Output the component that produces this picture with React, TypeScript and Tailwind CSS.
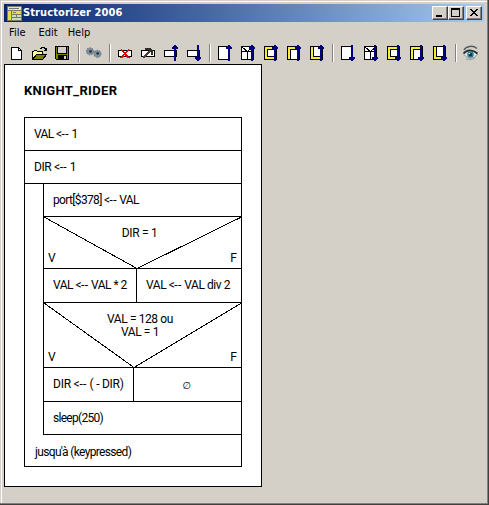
import React from "react";

const navy = "#000080";

function Glyph({ children }: { children: React.ReactNode }) {
  return (
    <button className="flex h-[22px] w-[23px] shrink-0 items-start pl-[3px] pt-[3px]">
      <svg width="17" height="17" viewBox="0 0 17 17" shapeRendering="crispEdges" className="block shrink-0">
        {children}
      </svg>
    </button>
  );
}

function Separator() {
  return (
    <div className="h-[22px] w-2 shrink-0 pl-1 pt-0.5">
      <div className="h-[18px] w-0.5 border-l border-r border-l-[#85827c] border-r-white" />
    </div>
  );
}

function Arrow({ down = false }: { down?: boolean }) {
  return (
    <g fill={navy} transform={down ? "matrix(1 0 0 -1 0 16)" : undefined}>
      <rect x="12" y="0" width="2" height="16" />
      <rect x="11" y="1" width="4" height="1" />
      <rect x="10" y="2" width="6" height="2" />
    </g>
  );
}

function Box({ x, y, w, h, fill = "#fff" }: { x: number; y: number; w: number; h: number; fill?: string }) {
  return <rect x={x + 0.5} y={y + 0.5} width={w - 1} height={h - 1} fill={fill} stroke="#000" />;
}

function InsertIcons({ down = false }: { down?: boolean }) {
  return (
    <>
      <Glyph>
        <Box x={2} y={1} w={12} h={14} />
        <Arrow down={down} />
      </Glyph>
      <Glyph>
        <Box x={2} y={1} w={13} h={14} />
        <path d="M2.5 6.5h12M8.5 6v8M3 2l5.500 4.500L14 2" fill="none" stroke="#000" />
        <Arrow down={down} />
      </Glyph>
      <Glyph>
        <Box x={2} y={1} w={13} h={14} fill="#f5ee35" />
        <Box x={5} y={4} w={10} h={8} />
        <Arrow down={down} />
      </Glyph>
      <Glyph>
        <Box x={2} y={1} w={13} h={14} fill="#f5ee35" />
        <Box x={5} y={4} w={10} h={11} />
        <Arrow down={down} />
      </Glyph>
      <Glyph>
        <Box x={2} y={1} w={13} h={14} fill="#f5ee35" />
        <Box x={5} y={1} w={10} h={11} />
        <Arrow down={down} />
      </Glyph>
    </>
  );
}

function Toolbar() {
  return (
    <div className="flex h-[22px] pl-px">
      <Glyph>
        <path d="M3.5 2.5h7l3 3v9h-10z" fill="#fff" stroke="#000" />
        <path d="M10.5 2.5v3h3" fill="none" stroke="#000" />
      </Glyph>
      <Glyph>
        <path d="M1.5 14V6.5h1l1-1h2l1 1h5v3" fill="#ffff9a" stroke="#000" />
        <path d="M1.5 14.5l4-5h10l-4 5z" fill="#808000" stroke="#000" />
        <path d="M9.5 4V3.5h1v-1h3v1h1v2M12.5 5.5h3M15.5 3v3" fill="none" stroke="#000" />
      </Glyph>
      <Glyph>
        <path d="M1.5 1.5h13v13h-12l-1-1z" fill="#808000" stroke="#000" />
        <path d="M4 2h8v6H4z" fill="#d4d0c8" />
        <path d="M3.5 2v6.5h9V2" fill="none" stroke="#000" />
        <path d="M4 10h9v5H4z" fill="#000" />
        <path d="M10 11h2v3h-2z" fill="#d4d0c8" />
      </Glyph>
      <Separator />
      <Glyph>
        <g shapeRendering="auto">
          <circle cx="5" cy="6.300" r="3.300" fill="#84909a" stroke="#75828d" strokeWidth="1.600" strokeDasharray="1.600 .8" />
          <circle cx="12.400" cy="8.800" r="3.300" fill="#84909a" stroke="#75828d" strokeWidth="1.600" strokeDasharray="1.600 .8" />
          <circle cx="5.500" cy="6.500" r="1.400" fill="#263c4b" />
          <circle cx="12.700" cy="8.400" r="1.400" fill="#263c4b" />
        </g>
      </Glyph>
      <Separator />
      <Glyph>
        <Box x={2} y={5} w={14} h={7} />
        <path d="M5 4.5l8 8.5M13 4.5L5 13" stroke="#e00000" strokeWidth="1.7" />
      </Glyph>
      <Glyph>
        <Box x={2} y={5} w={14} h={7} />
        <path d="M4 13l7-7" stroke="#513d35" strokeWidth="2" />
        <path d="M6 3h5l3 3v4h-2V7L9 5H6z" fill="#302a28" />
      </Glyph>
      <Glyph>
        <Box x={2} y={5} w={13} h={7} />
        <Arrow />
      </Glyph>
      <Glyph>
        <Box x={2} y={5} w={13} h={7} />
        <Arrow down />
      </Glyph>
      <Separator />
      <InsertIcons />
      <Separator />
      <InsertIcons down />
      <Separator />
      <Glyph>
        <g shapeRendering="auto">
          <path d="M2 5C4 1 11 0 15 3.500" fill="none" stroke="#555c60" strokeWidth="1.500" />
          <path d="M2 9.500C5 5 11 5 15.500 9 12 14.500 6 14.500 2 9.500z" fill="#d8e7ea" stroke="#777f82" strokeWidth=".7" />
          <path d="M1.500 8.500C5 4 11 4.500 15.500 8.500" fill="none" stroke="#232b30" strokeWidth="1.700" />
          <circle cx="8.500" cy="9.500" r="3.200" fill="#28788c" />
          <circle cx="8.500" cy="9.500" r="1.500" fill="#07232f" />
          <circle cx="7.500" cy="8.500" r=".8" fill="#d5ffff" />
          <path d="M4 14q5 2 9-1" fill="none" stroke="#8b8e8b" strokeWidth=".8" />
        </g>
      </Glyph>
    </div>
  );
}

function CaptionButton({ children }: { children: React.ReactNode }) {
  return (
    <button className="h-3.5 w-4 border border-b-[#404040] border-l-white border-r-[#404040] border-t-white bg-[#d4d0c8] shadow-[inset_-1px_-1px_0_#808080]">
      <svg width="14" height="12" viewBox="0 0 14 12" shapeRendering="crispEdges" className="block">
        {children}
      </svg>
    </button>
  );
}

function TitleBar() {
  return (
    <div className="flex h-[18px] items-center bg-linear-to-r from-[#0a246a] to-[#a6caf0] pl-[3px] pr-0.5">
      <svg width="15" height="15" viewBox="0 0 15 15" shapeRendering="crispEdges" className="shrink-0">
        <rect width="15" height="15" fill="#77796a" />
        <path d="M1 1h13v3H1z" fill="#e4e4d4" />
        <path d="M2 2h10v1H2z" fill="#77796a" />
        <path d="M1 5h3v9H1z" fill="#e4dc45" />
        <path d="M5 5h9v3H5z" fill="#e4dc45" />
        <path d="M6 6h3v1H6z" fill="#77796a" />
        <path d="M5 9h4v2H5zM10 9h4v2h-4zM5 12h9v2H5z" fill="#d5d5c5" />
      </svg>
      <span className="ml-px grow whitespace-nowrap font-['DejaVu_Sans_Condensed','DejaVu_Sans',sans-serif] text-[11px] font-bold leading-[18px] tracking-[0.1px] text-white">
        Structorizer 2006
      </span>
      <CaptionButton>
        <path d="M3 8h6v2H3z" />
      </CaptionButton>
      <CaptionButton>
        <path d="M2.500 1.500h8v8h-8zM2 2.500h9" fill="none" stroke="#000" />
      </CaptionButton>
      <div className="w-0.5" />
      <CaptionButton>
        <path d="M3 2h2v1h1v1h2V3h1V2h2v1h-1v1H9v1H8v1h1v1h1v1h1v1H9V8H8V7H6v1H5v1H3V8h1V7h1V6h1V5H5V4H4V3H3z" />
      </CaptionButton>
    </div>
  );
}

function Row({ children, className = "" }: { children: React.ReactNode; className?: string }) {
  return <div className={"flex items-center border-b border-black " + className}>{children}</div>;
}

function Assign({ to, children }: { to: string; children: React.ReactNode }) {
  return (
    <span>
      {to} &lt;<span className="tracking-[0.4px]">--</span> {children}
    </span>
  );
}

function Decision({
  height,
  apex,
  children,
}: {
  height: number;
  apex: number;
  children: React.ReactNode;
}) {
  return (
    <div className="relative flex flex-col border-b border-black" style={{ height }}>
      <svg
        width="198"
        height={height}
        viewBox={`0 0 198 ${height}`}
        className="absolute left-0 top-0"
        shapeRendering="crispEdges"
      >
        <path d={`M0 0L${apex} ${height - 0.5}L197.500 0`} fill="none" stroke="#000" />
      </svg>
      <div className="grow pt-2.5 text-center">{children}</div>
      <div className="flex justify-between pb-[3px] pl-1 pr-1">
        <span>V</span>
        <span>F</span>
      </div>
    </div>
  );
}

function Diagram() {
  return (
    <div className="h-[423px] w-[258px] whitespace-pre border border-black bg-white pl-[19px] pt-[19px] font-[Roboto,sans-serif] text-[12px] leading-[13px] text-black">
      <div className="h-[33px] text-[13px] font-bold leading-[14px] tracking-[0.35px]">KNIGHT_RIDER</div>
      <div className="h-[350px] w-[218px] border border-black">
        <Row className="h-[33px] pl-[9px] tracking-[-0.6px]">
          <Assign to="VAL">1</Assign>
        </Row>
        <Row className="h-[33px] pl-[9px] tracking-[-0.4px]">
          <Assign to="DIR">1</Assign>
        </Row>
        <div className="ml-[18px] border-l border-black">
          <Row className="h-[33px] pl-[9px] tracking-[-0.65px]">
            <Assign to="port[$378]">VAL</Assign>
          </Row>
          <Decision height={52} apex={93}>
            <div className="pr-1.5 tracking-[-0.3px]">DIR = 1</div>
          </Decision>
          <Row className="h-[34px]">
            <div className="flex h-full w-[93px] items-center border-r border-black pl-[9px] tracking-[-0.5px]">
              <Assign to="VAL">VAL * 2</Assign>
            </div>
            <div className="pl-[9px] tracking-[-0.45px]">
              <Assign to="VAL">VAL div 2</Assign>
            </div>
          </Row>
          <Decision height={65} apex={90}>
            <div className="pr-[5px] tracking-[-0.4px]">VAL = 128 ou{"\n"}VAL = 1</div>
          </Decision>
          <Row className="h-[34px]">
            <div className="flex h-full w-[90px] items-center border-r border-black pl-[9px] tracking-[-0.25px]">
              <Assign to="DIR">( - DIR)</Assign>
            </div>
            <div className="grow pr-0.5 pt-0.5 text-center font-['DejaVu_Sans',sans-serif] text-[10px]">∅</div>
          </Row>
          <Row className="h-[33px] pl-[9px] tracking-[-0.7px]">sleep(250)</Row>
        </div>
        <div className="flex h-[31px] items-center pl-[10px] pt-[3px] tracking-[-0.65px]">jusqu'à (keypressed)</div>
      </div>
    </div>
  );
}

export default function App() {
  return (
    <div className="h-[505px] w-[489px] overflow-hidden border-b border-r border-[#404040] bg-[#d4d0c8]">
      <div className="h-[504px] w-[488px] border-b border-r border-[#808080] pl-px pt-px">
        <div className="h-[502px] w-[486px] border-l border-t border-white pl-0.5 pt-0.5">
          <div className="w-[480px]">
            <TitleBar />
            <nav className="flex h-5 items-center gap-[13px] pl-[5px] pt-0.5 font-['DejaVu_Sans_Condensed','DejaVu_Sans',sans-serif] text-[11px] text-black">
              <span>File</span>
              <span>Edit</span>
              <span className="-ml-[3px]">Help</span>
            </nav>
            <Toolbar />
            <Diagram />
          </div>
        </div>
      </div>
    </div>
  );
}
